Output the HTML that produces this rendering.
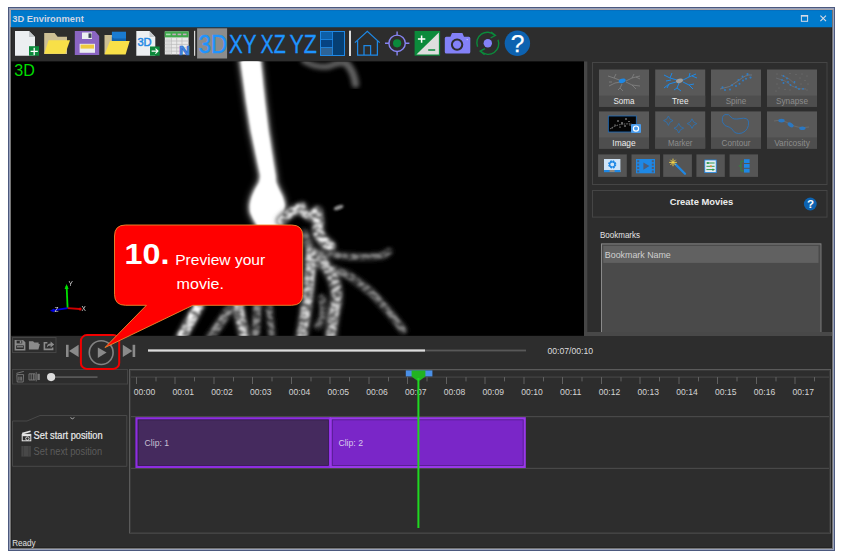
<!DOCTYPE html>
<html lang="en">
<head>
<meta charset="utf-8">
<title>3D Environment</title>
<style>
html,body{margin:0;padding:0;background:#fff;}
body{width:841px;height:558px;overflow:hidden;position:relative;font-family:"Liberation Sans",sans-serif;}
svg{position:absolute;left:0;top:0;display:block;}
text{font-family:"Liberation Sans",sans-serif;}
</style>
</head>
<body>
<svg width="841" height="558" viewBox="0 0 841 558">
<defs>
<filter id="b1" x="-20%" y="-20%" width="140%" height="140%"><feGaussianBlur stdDeviation="1.1"/></filter>
<filter id="b2" x="-20%" y="-20%" width="140%" height="140%"><feGaussianBlur stdDeviation="2.2"/></filter>
<filter id="b3" x="-50%" y="-50%" width="200%" height="200%"><feGaussianBlur stdDeviation="4"/></filter>
<filter id="b0" x="-20%" y="-20%" width="140%" height="140%"><feGaussianBlur stdDeviation="0.35"/></filter>
<filter id="b05" x="-20%" y="-20%" width="140%" height="140%"><feGaussianBlur stdDeviation="0.85"/></filter>
<filter id="b15" x="-20%" y="-20%" width="140%" height="140%"><feGaussianBlur stdDeviation="1.9"/></filter>
<filter id="tex" x="0" y="0" width="841" height="558" filterUnits="userSpaceOnUse" color-interpolation-filters="sRGB">
<feGaussianBlur in="SourceGraphic" stdDeviation="1.2" result="bl"/>
<feTurbulence type="fractalNoise" baseFrequency="0.17 0.26" numOctaves="1" seed="11" result="n"/>
<feColorMatrix in="n" type="matrix" values="0 0 0 0 0  0 0 0 0 0  0 0 0 0 0  0 3.4 0 0 -1.15" result="na"/>
<feComposite in="bl" in2="na" operator="in" result="t"/>
<feGaussianBlur in="t" stdDeviation="0.8"/>
</filter>
<clipPath id="vp"><rect x="11" y="61.4" width="573" height="274.4"/></clipPath>
</defs>

<!-- window frame -->
<g id="frame">
<rect x="8" y="7" width="827" height="544" fill="#4c597e"/>
<rect x="9" y="8" width="825" height="542" fill="#98a1ba"/>
<rect x="10" y="9" width="823" height="540" fill="#747474"/>
<rect x="10" y="9" width="823" height="1" fill="#aca4a6"/>
<rect x="10" y="9" width="1" height="18" fill="#aaa3ab"/>
<rect x="11" y="10" width="821" height="538" fill="#242424"/>
<rect x="12" y="10" width="819" height="537" fill="#2d2d2d"/>
</g>

<!-- title bar -->
<g id="titlebar">
<rect x="11" y="10" width="821" height="17.25" fill="#007acc"/><rect x="11" y="10" width="821" height="1" fill="#046fbf"/>
<text x="12.3" y="22" font-size="9.5" font-weight="bold" fill="#cfd5e3" textLength="71.5" lengthAdjust="spacingAndGlyphs">3D Environment</text>
<rect x="801.4" y="15.9" width="6.2" height="5.4" fill="none" stroke="#d6dbe6" stroke-width="1"/><rect x="800.9" y="15" width="7.2" height="1.4" fill="#d6dbe6"/>
<path d="M820.4 15.6 L826 21.2 M826 15.6 L820.4 21.2" stroke="#d6dbe6" stroke-width="1.1" fill="none"/>
</g>

<!-- TOOLBAR -->
<g id="toolbar">
<!-- new file -->
<path d="M15 31 H29 L35 37 V55.7 H15 Z" fill="#eceff1"/>
<path d="M29 31 L35 37 H29 Z" fill="#c3c7ca"/>
<rect x="29" y="46.2" width="10" height="9.5" fill="#0b8a3b"/>
<path d="M34.2 47.8 V55 M30.6 51.4 H37.8" stroke="#fff" stroke-width="1.3"/>
<!-- folder open -->
<path d="M44.2 33 H54.6 L57.6 36.7 H67 V54 H44.2 Z" fill="#cdbf94"/>
<path d="M48.6 40.3 H70 L65.3 53.8 H44.2 Z" fill="#f8e048"/>
<!-- save -->
<path d="M74.8 31 H95 L99.2 36 V55 H74.8 Z" fill="#8a65c2"/>
<rect x="82" y="32.5" width="10" height="6.5" fill="#eceff1"/>
<rect x="88.5" y="33.4" width="3" height="4.5" fill="#3b4458"/>
<rect x="79.6" y="43.8" width="15.4" height="9" fill="#eceff1"/>
<rect x="80.6" y="44.6" width="13.4" height="4" fill="#efc93e"/>
<!-- folder w/ docs -->
<path d="M104.5 35 H113 V54 H104.5 Z" fill="#cdbf94"/>
<rect x="111.9" y="31.7" width="14.1" height="9.4" fill="#1a7bd0"/>
<path d="M111.9 37 L114 38.5 H126 V41 H111.9 Z" fill="#1262ac"/>
<path d="M110 40.9 H129.7 L125.6 54.5 H104.5 Z" fill="#f8e048"/>
<!-- 3D export -->
<path d="M136.3 31 H149.5 L155.3 37 V55.7 H136.3 Z" fill="#eceff1"/>
<path d="M149.5 31 L155.3 37 H149.5 Z" fill="#c3c7ca"/>
<text x="137.4" y="45.7" font-size="10.6" fill="#1e88e5" stroke="#1e88e5" stroke-width="0.45" textLength="14.2" lengthAdjust="spacingAndGlyphs">3D</text>
<rect x="150" y="46.5" width="9.7" height="9.2" fill="#0b8a3b"/>
<path d="M151.6 51.1 H158 M155.4 48.6 L158 51.1 L155.4 53.6" stroke="#fff" stroke-width="1.1" fill="none"/>
<!-- table -->
<rect x="164.8" y="31.4" width="23.8" height="23.1" fill="#e9e9e9"/>
<rect x="164.8" y="31.4" width="23.8" height="6" fill="#3fa84c"/>
<rect x="166" y="33.6" width="4.6" height="1.6" fill="#a9dcae"/><rect x="172.3" y="33.6" width="3.6" height="1.6" fill="#c7a8c0"/><rect x="177.6" y="33.6" width="3.6" height="1.6" fill="#c7a8c0"/><rect x="182.9" y="33.6" width="3.6" height="1.6" fill="#c7a8c0"/>
<path d="M164.8 41 H188.6 M164.8 44.4 H188.6 M164.8 47.8 H188.6 M164.8 51.2 H188.6 M171.4 37.4 V54.5 M176.7 37.4 V54.5 M182 37.4 V54.5" stroke="#b9b9b9" stroke-width="0.7" fill="none"/>
<rect x="165.6" y="38.4" width="5" height="15.6" fill="#cfcfcf" opacity="0.6"/>
<text x="178.9" y="55.3" font-size="13.4" font-weight="bold" fill="#4a8ae6" stroke="#2f6fd0" stroke-width="0.7" textLength="11.2" lengthAdjust="spacingAndGlyphs">N</text>
<!-- separator -->
<rect x="194" y="30.8" width="1.2" height="25" fill="#d8d8d8"/>
<!-- 3D XY XZ YZ -->
<rect x="197.1" y="28.3" width="30" height="30.2" fill="#8c8c8c"/>
<text x="198.4" y="52.6" font-size="26" fill="#1e94ff" stroke="#1e94ff" stroke-width="0.3" textLength="28.8" lengthAdjust="spacingAndGlyphs">3D</text>
<text x="229" y="52.6" font-size="26" fill="#1e94ff" stroke="#1e94ff" stroke-width="0.3" textLength="27.6" lengthAdjust="spacingAndGlyphs">XY</text>
<text x="260.6" y="52.6" font-size="26" fill="#1e94ff" stroke="#1e94ff" stroke-width="0.3" textLength="25.2" lengthAdjust="spacingAndGlyphs">XZ</text>
<text x="289.4" y="52.6" font-size="26" fill="#1e94ff" stroke="#1e94ff" stroke-width="0.3" textLength="27.4" lengthAdjust="spacingAndGlyphs">YZ</text>
<!-- panel layout icon -->
<rect x="320" y="31" width="25" height="25" fill="#1e88e5"/>
<rect x="321" y="32" width="11.2" height="7.2" fill="#0d5fa8"/>
<rect x="321" y="40" width="11.2" height="7" fill="#064383"/>
<rect x="321" y="47.8" width="11.2" height="7.2" fill="#2d6396"/>
<rect x="333" y="32" width="11" height="23" fill="#063f73"/>
<rect x="349" y="30.7" width="2" height="25.3" fill="#dcdcdc"/>
<!-- home -->
<path d="M354.9 42.6 L367.3 31.4 L379.7 42.6 M357.6 40.4 V55 H377.4 V40.4 M364 55 V45.6 H370.6 V55" fill="none" stroke="#1e88e5" stroke-width="1.25"/>
<!-- target -->
<circle cx="397.1" cy="43.3" r="8.2" fill="none" stroke="#8784f2" stroke-width="1.4"/>
<path d="M397.1 31.4 V35.4 M397.1 51.2 V55.4 M385 43.3 H389.2 M405 43.3 H409.4" stroke="#8784f2" stroke-width="1.4"/>
<circle cx="397.1" cy="43.3" r="4.1" fill="#0b8a3b"/>
<!-- plus/minus -->
<rect x="414.6" y="31" width="25.5" height="24.7" fill="#0b8a3b"/>
<path d="M438.9 32.6 V54.4 H416.4 Z" fill="#dedede"/>
<path d="M421.6 35.4 V42.8 M417.9 39.1 H425.3" stroke="#fff" stroke-width="1.5"/>
<path d="M428.2 50 H435.2" stroke="#0b8a3b" stroke-width="1.5"/>
<!-- camera -->
<path d="M446.3 36.8 H450.4 L452 33 H462.4 L464 36.8 H468.8 Q470.3 36.8 470.3 38.3 V52 Q470.3 53.5 468.8 53.5 H446.3 Q444.8 53.5 444.8 52 V38.3 Q444.8 36.8 446.3 36.8 Z" fill="#8381f7"/>
<circle cx="457.1" cy="44.6" r="5.2" fill="#8381f7" stroke="#2d2d2d" stroke-width="2"/>
<circle cx="467.2" cy="39.6" r="0.7" fill="#d0d0ff"/>
<!-- refresh -->
<path d="M477.6 46.8 A10.6 10.6 0 0 1 494.6 35" fill="none" stroke="#0b8a3b" stroke-width="1.4"/>
<path d="M491 32 L495.4 35.4 L490.6 38" fill="none" stroke="#0b8a3b" stroke-width="1.4"/>
<path d="M498 39.8 A10.6 10.6 0 0 1 481 51.6" fill="none" stroke="#0b8a3b" stroke-width="1.4"/>
<path d="M484.6 54.6 L480.2 51.2 L485 48.6" fill="none" stroke="#0b8a3b" stroke-width="1.4"/>
<circle cx="487.8" cy="43.3" r="4.2" fill="#8381f7"/>
<!-- help -->
<circle cx="517.4" cy="43.3" r="12.7" fill="#0d62b0"/>
<text x="517.6" y="52.4" font-size="24.5" fill="#fff" text-anchor="middle" stroke="#fff" stroke-width="0.25">?</text>
</g>



<!-- VIEWPORT -->
<g id="viewport">
<rect x="11" y="61.4" width="573" height="274.4" fill="#000"/>
<g clip-path="url(#vp)">
<!-- glow of main trunk + soma -->
<path d="M239.7 48.0 L239.9 50.0 L240.1 52.0 L240.3 54.0 L240.5 56.0 L240.7 58.0 L240.9 60.0 L241.1 62.0 L241.4 64.0 L241.6 66.0 L241.9 68.0 L242.2 70.0 L242.5 72.0 L242.7 74.0 L243.0 76.0 L243.3 78.0 L243.6 80.0 L243.8 82.0 L244.1 84.0 L244.4 86.0 L244.7 88.0 L244.9 90.0 L245.2 92.0 L245.5 94.0 L245.8 96.0 L246.0 98.0 L246.3 100.0 L246.6 102.0 L246.9 104.0 L247.3 106.0 L247.6 108.0 L247.9 110.0 L248.2 112.0 L248.5 114.0 L248.9 116.0 L249.2 118.0 L249.5 120.0 L249.8 122.0 L250.1 124.0 L250.5 126.0 L250.8 128.0 L251.1 130.0 L251.5 132.0 L251.9 134.0 L252.4 136.0 L252.8 138.0 L253.2 140.0 L253.6 142.0 L254.0 144.0 L254.5 146.0 L254.9 148.0 L255.3 150.0 L255.7 152.0 L256.1 154.0 L256.6 156.0 L257.0 158.0 L257.4 160.0 L257.8 162.0 L258.2 164.0 L258.7 166.0 L259.1 168.0 L259.5 170.0 L259.9 172.0 L260.4 174.0 L260.8 176.0 L260.5 178.0 L260.1 180.0 L259.8 182.0 L258.6 184.0 L257.4 186.0 L256.2 188.0 L255.1 190.0 L254.2 192.0 L253.3 194.0 L252.5 196.0 L251.7 198.0 L251.2 200.0 L250.8 202.0 L250.3 204.0 L250.1 206.0 L250.2 208.0 L250.3 210.0 L250.4 212.0 L251.3 214.0 L252.2 216.0 L253.1 218.0 L254.2 220.0 L255.4 222.0 L256.5 224.0 L257.8 226.0 L259.0 228.0 L260.2 230.0 L261.5 232.0 L275.5 232.0 L276.6 230.0 L277.7 228.0 L278.8 226.0 L279.9 224.0 L280.6 222.0 L281.4 220.0 L282.1 218.0 L282.6 216.0 L283.1 214.0 L283.6 212.0 L283.9 210.0 L284.2 208.0 L284.5 206.0 L284.3 204.0 L283.8 202.0 L283.2 200.0 L282.7 198.0 L281.9 196.0 L280.9 194.0 L279.9 192.0 L278.9 190.0 L278.0 188.0 L277.1 186.0 L276.3 184.0 L275.4 182.0 L275.3 180.0 L275.3 178.0 L275.2 176.0 L274.9 174.0 L274.6 172.0 L274.2 170.0 L273.9 168.0 L273.6 166.0 L273.2 164.0 L272.9 162.0 L272.6 160.0 L272.3 158.0 L272.0 156.0 L271.7 154.0 L271.3 152.0 L271.0 150.0 L270.7 148.0 L270.4 146.0 L270.1 144.0 L269.8 142.0 L269.5 140.0 L269.2 138.0 L268.8 136.0 L268.5 134.0 L268.2 132.0 L267.9 130.0 L267.7 128.0 L267.4 126.0 L267.2 124.0 L266.9 122.0 L266.7 120.0 L266.5 118.0 L266.2 116.0 L266.0 114.0 L265.7 112.0 L265.5 110.0 L265.3 108.0 L265.0 106.0 L264.8 104.0 L264.5 102.0 L264.3 100.0 L264.1 98.0 L263.9 96.0 L263.7 94.0 L263.5 92.0 L263.2 90.0 L263.0 88.0 L262.8 86.0 L262.6 84.0 L262.4 82.0 L262.2 80.0 L262.0 78.0 L261.8 76.0 L261.6 74.0 L261.4 72.0 L261.1 70.0 L260.9 68.0 L260.7 66.0 L260.5 64.0 L260.3 62.0 L260.1 60.0 L259.9 58.0 L259.7 56.0 L259.5 54.0 L259.3 52.0 L259.1 50.0 L258.9 48.0 Z" fill="#fff" filter="url(#b3)" opacity="0.75"/>
<path d="M239.1 48.0 L239.3 50.0 L239.5 52.0 L239.7 54.0 L239.9 56.0 L240.1 58.0 L240.3 60.0 L240.5 62.0 L240.8 64.0 L241.0 66.0 L241.3 68.0 L241.6 70.0 L241.9 72.0 L242.1 74.0 L242.4 76.0 L242.7 78.0 L243.0 80.0 L243.2 82.0 L243.5 84.0 L243.8 86.0 L244.1 88.0 L244.3 90.0 L244.6 92.0 L244.9 94.0 L245.2 96.0 L245.4 98.0 L245.7 100.0 L246.0 102.0 L246.3 104.0 L246.7 106.0 L247.0 108.0 L247.3 110.0 L247.6 112.0 L247.9 114.0 L248.3 116.0 L248.6 118.0 L248.9 120.0 L249.2 122.0 L249.5 124.0 L249.9 126.0 L250.2 128.0 L250.5 130.0 L250.9 132.0 L251.3 134.0 L251.8 136.0 L252.2 138.0 L252.6 140.0 L253.0 142.0 L253.4 144.0 L253.9 146.0 L254.3 148.0 L254.7 150.0 L255.1 152.0 L255.5 154.0 L256.0 156.0 L256.4 158.0 L256.8 160.0 L257.2 162.0 L257.6 164.0 L258.1 166.0 L258.5 168.0 L258.9 170.0 L259.4 172.0 L259.8 174.0 L260.2 176.0 L259.9 178.0 L259.5 180.0 L259.2 182.0 L258.0 184.0 L256.8 186.0 L255.6 188.0 L254.5 190.0 L253.6 192.0 L252.8 194.0 L251.9 196.0 L251.1 198.0 L250.7 200.0 L250.1 202.0 L249.7 204.0 L249.5 206.0 L249.6 208.0 L249.7 210.0 L249.8 212.0 L250.7 214.0 L251.6 216.0 L252.5 218.0 L253.6 220.0 L254.8 222.0 L255.9 224.0 L257.1 226.0 L258.4 228.0 L259.7 230.0 L260.9 232.0 L276.1 232.0 L277.2 230.0 L278.3 228.0 L279.4 226.0 L280.5 224.0 L281.2 222.0 L282.0 220.0 L282.7 218.0 L283.2 216.0 L283.7 214.0 L284.2 212.0 L284.5 210.0 L284.8 208.0 L285.1 206.0 L284.9 204.0 L284.4 202.0 L283.8 200.0 L283.3 198.0 L282.5 196.0 L281.5 194.0 L280.5 192.0 L279.5 190.0 L278.6 188.0 L277.7 186.0 L276.9 184.0 L276.0 182.0 L275.9 180.0 L275.9 178.0 L275.8 176.0 L275.5 174.0 L275.1 172.0 L274.8 170.0 L274.5 168.0 L274.2 166.0 L273.9 164.0 L273.5 162.0 L273.2 160.0 L272.9 158.0 L272.6 156.0 L272.3 154.0 L271.9 152.0 L271.6 150.0 L271.3 148.0 L271.0 146.0 L270.7 144.0 L270.4 142.0 L270.1 140.0 L269.8 138.0 L269.4 136.0 L269.1 134.0 L268.8 132.0 L268.5 130.0 L268.3 128.0 L268.0 126.0 L267.8 124.0 L267.5 122.0 L267.3 120.0 L267.1 118.0 L266.8 116.0 L266.6 114.0 L266.3 112.0 L266.1 110.0 L265.9 108.0 L265.6 106.0 L265.4 104.0 L265.1 102.0 L264.9 100.0 L264.7 98.0 L264.5 96.0 L264.3 94.0 L264.1 92.0 L263.8 90.0 L263.6 88.0 L263.4 86.0 L263.2 84.0 L263.0 82.0 L262.8 80.0 L262.6 78.0 L262.4 76.0 L262.2 74.0 L262.0 72.0 L261.7 70.0 L261.5 68.0 L261.3 66.0 L261.1 64.0 L260.9 62.0 L260.7 60.0 L260.5 58.0 L260.3 56.0 L260.1 54.0 L259.9 52.0 L259.7 50.0 L259.5 48.0 Z" fill="#fff" filter="url(#b15)"/>
<path d="M240.3 48.0 L240.5 50.0 L240.7 52.0 L240.9 54.0 L241.1 56.0 L241.3 58.0 L241.5 60.0 L241.7 62.0 L242.0 64.0 L242.2 66.0 L242.5 68.0 L242.8 70.0 L243.1 72.0 L243.3 74.0 L243.6 76.0 L243.9 78.0 L244.2 80.0 L244.4 82.0 L244.7 84.0 L245.0 86.0 L245.3 88.0 L245.5 90.0 L245.8 92.0 L246.1 94.0 L246.4 96.0 L246.6 98.0 L246.9 100.0 L247.2 102.0 L247.5 104.0 L247.9 106.0 L248.2 108.0 L248.5 110.0 L248.8 112.0 L249.1 114.0 L249.5 116.0 L249.8 118.0 L250.1 120.0 L250.4 122.0 L250.7 124.0 L251.1 126.0 L251.4 128.0 L251.7 130.0 L252.1 132.0 L252.5 134.0 L253.0 136.0 L253.4 138.0 L253.8 140.0 L254.2 142.0 L254.6 144.0 L255.1 146.0 L255.5 148.0 L255.9 150.0 L256.3 152.0 L256.7 154.0 L257.2 156.0 L257.6 158.0 L258.0 160.0 L258.4 162.0 L258.9 164.0 L259.3 166.0 L259.7 168.0 L260.1 170.0 L260.6 172.0 L261.0 174.0 L261.4 176.0 L261.1 178.0 L260.7 180.0 L260.4 182.0 L259.2 184.0 L258.0 186.0 L256.8 188.0 L255.7 190.0 L254.8 192.0 L253.9 194.0 L253.1 196.0 L252.3 198.0 L251.9 200.0 L251.3 202.0 L250.9 204.0 L250.7 206.0 L250.8 208.0 L250.9 210.0 L251.0 212.0 L251.9 214.0 L252.8 216.0 L253.7 218.0 L254.8 220.0 L256.0 222.0 L257.1 224.0 L258.3 226.0 L259.6 228.0 L260.9 230.0 L262.1 232.0 L274.9 232.0 L276.0 230.0 L277.1 228.0 L278.2 226.0 L279.3 224.0 L280.0 222.0 L280.8 220.0 L281.5 218.0 L282.0 216.0 L282.5 214.0 L283.0 212.0 L283.3 210.0 L283.6 208.0 L283.9 206.0 L283.7 204.0 L283.2 202.0 L282.6 200.0 L282.1 198.0 L281.3 196.0 L280.3 194.0 L279.3 192.0 L278.3 190.0 L277.4 188.0 L276.5 186.0 L275.7 184.0 L274.8 182.0 L274.7 180.0 L274.7 178.0 L274.6 176.0 L274.3 174.0 L273.9 172.0 L273.6 170.0 L273.3 168.0 L273.0 166.0 L272.6 164.0 L272.3 162.0 L272.0 160.0 L271.7 158.0 L271.4 156.0 L271.1 154.0 L270.7 152.0 L270.4 150.0 L270.1 148.0 L269.8 146.0 L269.5 144.0 L269.2 142.0 L268.9 140.0 L268.6 138.0 L268.2 136.0 L267.9 134.0 L267.6 132.0 L267.3 130.0 L267.1 128.0 L266.8 126.0 L266.6 124.0 L266.3 122.0 L266.1 120.0 L265.9 118.0 L265.6 116.0 L265.4 114.0 L265.1 112.0 L264.9 110.0 L264.7 108.0 L264.4 106.0 L264.2 104.0 L263.9 102.0 L263.7 100.0 L263.5 98.0 L263.3 96.0 L263.1 94.0 L262.9 92.0 L262.6 90.0 L262.4 88.0 L262.2 86.0 L262.0 84.0 L261.8 82.0 L261.6 80.0 L261.4 78.0 L261.2 76.0 L261.0 74.0 L260.8 72.0 L260.5 70.0 L260.3 68.0 L260.1 66.0 L259.9 64.0 L259.7 62.0 L259.5 60.0 L259.3 58.0 L259.1 56.0 L258.9 54.0 L258.7 52.0 L258.5 50.0 L258.3 48.0 Z" fill="#fff" filter="url(#b1)"/>
<!-- faint top dendrite -->
<g filter="url(#b2)" fill="none" stroke="#626262" stroke-linecap="round">
<path d="M304 61 Q318 69 330 66 Q340 61 347 64" stroke-width="6"/><path d="M347 64 Q354 72 355.5 84" stroke-width="7.5"/>
</g>
<!-- lower dendrites -->
<g fill="none" stroke-linecap="round" stroke-linejoin="round">
<g filter="url(#b2)">
<path d="M281.5 220.6 Q290 211 302 207" stroke-width="11.0" stroke="#616161"/>
<path d="M299 209 Q304 213 309 216.4 Q313 213 317 212" stroke-width="9.5" stroke="#616161"/>
<path d="M317 212 Q319 222 318 232 Q322 241 330 246" stroke-width="12.5" stroke="#646464"/>
<path d="M304 234 Q308 244 312 254" stroke-width="10.5" stroke="#353535"/>
<path d="M316 252 Q350 259 380 256 Q386 255 389 251.5" stroke-width="7.5" stroke="#373737"/>
<path d="M318 264 Q335 270 348 275 Q364 286 373 294 Q390 312 403 330" stroke-width="9.0" stroke="#383838"/>
<path d="M311 252 Q310 290 301.5 338" stroke-width="12.5" stroke="#5a5a5a"/>
<path d="M320 259 Q340 280 336 304 Q332 320 331 338" stroke-width="12.5" stroke="#545454"/>
<path d="M322 298 Q326 315 318 326" stroke-width="8.5" stroke="#2f2f2f"/>
<path d="M199 305 L181 338" stroke-width="12.0" stroke="#6b6b6b"/>
<path d="M229 310 L210 338" stroke-width="10.0" stroke="#3f3f3f"/>
<path d="M238 303 Q240 320 245 338" stroke-width="12.0" stroke="#5a5a5a"/>
<path d="M257.5 303 L255.5 338" stroke-width="9.0" stroke="#3c3c3c"/>
<path d="M269 307 L272 338" stroke-width="8.0" stroke="#393939"/>
</g>
<g filter="url(#tex)">
<path d="M281.5 220.6 Q290 211 302 207" stroke-width="8.1" stroke="#e8e8e8"/>
<path d="M299 209 Q304 213 309 216.4 Q313 213 317 212" stroke-width="6.8" stroke="#e8e8e8"/>
<path d="M317 212 Q319 222 318 232 Q322 241 330 246" stroke-width="9.3" stroke="#f0f0f0"/>
<path d="M304 234 Q308 244 312 254" stroke-width="7.6" stroke="#808080"/>
<path d="M316 252 Q350 259 380 256 Q386 255 389 251.5" stroke-width="5.1" stroke="#848484"/>
<path d="M318 264 Q335 270 348 275 Q364 286 373 294 Q390 312 403 330" stroke-width="6.4" stroke="#868686"/>
<path d="M311 252 Q310 290 301.5 338" stroke-width="9.3" stroke="#d8d8d8"/>
<path d="M320 259 Q340 280 336 304 Q332 320 331 338" stroke-width="9.3" stroke="#c8c8c8"/>
<path d="M322 298 Q326 315 318 326" stroke-width="6.0" stroke="#707070"/>
<path d="M199 305 L181 338" stroke-width="8.9" stroke="#ffffff"/>
<path d="M229 310 L210 338" stroke-width="7.2" stroke="#989898"/>
<path d="M238 303 Q240 320 245 338" stroke-width="8.9" stroke="#d8d8d8"/>
<path d="M257.5 303 L255.5 338" stroke-width="6.4" stroke="#909090"/>
<path d="M269 307 L272 338" stroke-width="5.5" stroke="#888888"/>
</g>
<g stroke-dasharray="1.5 1.9" stroke-linecap="butt" filter="url(#b05)" opacity="0.25">
<path d="M281.5 220.6 Q290 211 302 207" stroke-width="5.7" stroke="#e8e8e8"/>
<path d="M299 209 Q304 213 309 216.4 Q313 213 317 212" stroke-width="4.8" stroke="#e8e8e8"/>
<path d="M317 212 Q319 222 318 232 Q322 241 330 246" stroke-width="6.6" stroke="#f0f0f0"/>
<path d="M304 234 Q308 244 312 254" stroke-width="5.4" stroke="#808080"/>
<path d="M316 252 Q350 259 380 256 Q386 255 389 251.5" stroke-width="3.6" stroke="#848484"/>
<path d="M318 264 Q335 270 348 275 Q364 286 373 294 Q390 312 403 330" stroke-width="4.5" stroke="#868686"/>
<path d="M311 252 Q310 290 301.5 338" stroke-width="6.6" stroke="#d8d8d8"/>
<path d="M320 259 Q340 280 336 304 Q332 320 331 338" stroke-width="6.6" stroke="#c8c8c8"/>
<path d="M322 298 Q326 315 318 326" stroke-width="4.2" stroke="#707070"/>
<path d="M199 305 L181 338" stroke-width="6.3" stroke="#ffffff"/>
<path d="M229 310 L210 338" stroke-width="5.1" stroke="#989898"/>
<path d="M238 303 Q240 320 245 338" stroke-width="6.3" stroke="#d8d8d8"/>
<path d="M257.5 303 L255.5 338" stroke-width="4.5" stroke="#909090"/>
<path d="M269 307 L272 338" stroke-width="3.9" stroke="#888888"/>
</g>
<ellipse cx="338.6" cy="207.6" rx="5" ry="2" transform="rotate(-20 338.6 207.6)" fill="#9a9a9a" filter="url(#b1)"/>
</g>
</g>
<!-- 3D label -->
<text x="14.3" y="76.1" font-size="17.1" fill="#00dc00" textLength="20.6" lengthAdjust="spacingAndGlyphs">3D</text>
<!-- axes -->
<g filter="url(#b0)">
<path d="M67.6 308.2 L66.6 286" stroke="#00e000" stroke-width="1.8"/>
<path d="M64.6 289 L66.6 284 L68.6 289 Z" fill="#00e000"/>
<path d="M67.6 308.2 L80 309" stroke="#d00000" stroke-width="1.8"/>
<circle cx="80.2" cy="309" r="1.5" fill="#e00000"/>
<path d="M67.6 308.2 L53 310.4" stroke="#0000e0" stroke-width="1.8"/>
<path d="M54 308.6 L50 310.8 L54.4 312.4 Z" fill="#0000e0"/>
<text x="68.4" y="286.4" font-size="6.5" fill="#ddd">Y</text>
<text x="81.4" y="310.6" font-size="6.5" fill="#ddd">X</text>
<text x="54.6" y="312" font-size="6.5" fill="#ddd">Z</text>
</g>
</g>

<!-- RIGHTPANEL -->
<g id="rightpanel">
<rect x="584" y="61.5" width="3.3" height="274.5" fill="#464646"/>
<rect x="584" y="332" width="248" height="4" fill="#484848"/>
<!-- group box 1 -->
<rect x="592.5" y="62.5" width="234.5" height="122" fill="none" stroke="#454545" stroke-width="1"/>
<!-- row 1 buttons -->
<g>
<rect x="599" y="69.5" width="50" height="37.2" fill="#595959"/><rect x="599" y="95.6" width="50" height="11.1" fill="#4e4e4e"/>
<rect x="655.2" y="69.5" width="50" height="37.2" fill="#595959"/><rect x="655.2" y="95.6" width="50" height="11.1" fill="#4e4e4e"/>
<rect x="711" y="69.5" width="50" height="37.2" fill="#595959"/><rect x="711" y="95.6" width="50" height="11.1" fill="#4e4e4e"/>
<rect x="767" y="69.5" width="50" height="37.2" fill="#595959"/><rect x="767" y="95.6" width="50" height="11.1" fill="#4e4e4e"/>
<rect x="599" y="111.4" width="50" height="37.2" fill="#595959"/><rect x="599" y="137.4" width="50" height="11.2" fill="#4e4e4e"/>
<rect x="655.2" y="111.4" width="50" height="37.2" fill="#595959"/><rect x="655.2" y="137.4" width="50" height="11.2" fill="#4e4e4e"/>
<rect x="711" y="111.4" width="50" height="37.2" fill="#595959"/><rect x="711" y="137.4" width="50" height="11.2" fill="#4e4e4e"/>
<rect x="767" y="111.4" width="50" height="37.2" fill="#595959"/><rect x="767" y="137.4" width="50" height="11.2" fill="#4e4e4e"/>
</g>
<g font-size="9.4" text-anchor="middle">
<text x="624" y="104.3" fill="#ececec" textLength="21" lengthAdjust="spacingAndGlyphs">Soma</text>
<text x="680.2" y="104.3" fill="#ececec" textLength="16.5" lengthAdjust="spacingAndGlyphs">Tree</text>
<text x="736" y="104.3" fill="#8c8c8c" textLength="20.7" lengthAdjust="spacingAndGlyphs">Spine</text>
<text x="792" y="104.3" fill="#8c8c8c" textLength="32" lengthAdjust="spacingAndGlyphs">Synapse</text>
<text x="624" y="146.2" fill="#ececec" textLength="23.3" lengthAdjust="spacingAndGlyphs">Image</text>
<text x="680.2" y="146.2" fill="#8c8c8c" textLength="24.5" lengthAdjust="spacingAndGlyphs">Marker</text>
<text x="736" y="146.2" fill="#8c8c8c" textLength="28.9" lengthAdjust="spacingAndGlyphs">Contour</text>
<text x="792" y="146.2" fill="#8c8c8c" textLength="35.7" lengthAdjust="spacingAndGlyphs">Varicosity</text>
</g>
<!-- Soma icon -->
<g fill="none" stroke="#8a8a8a" stroke-width="0.7">
<path d="M608 76 L614 78 L622 81 M614 78 L616 74 M609 86 L615 83 L621 82 M612 82 L609 82 M626 81 L632 78 L640 76 M632 78 L634 74 M636 77 L640 79 M626 82 L632 85 L640 86 M632 85 L636 89 M622 84 L620 88 L618 90 M620 88 L623 91"/>
</g>
<ellipse cx="622.2" cy="80.8" rx="3.6" ry="2.2" fill="#1e88e5" transform="rotate(-15 622.2 80.8)"/>
<!-- Tree icon -->
<g fill="none" stroke="#1e88e5" stroke-width="1">
<path d="M664 75 L670 78 L677 80 M670 78 L672 73 M666 81 L671 80 M664 88 L669 84 L676 82 M669 84 L667 88 M683 80 L689 77 L696 74 M689 77 L690 73 M692 76 L697 78 M683 82 L689 85 L694 84 M689 85 L693 89 M679 83 L677 88 L674 90 M677 88 L681 91"/>
</g>
<ellipse cx="679.5" cy="80.8" rx="3.6" ry="2.2" fill="#9e9e9e" transform="rotate(-15 679.5 80.8)"/>
<!-- Spine icon -->
<path d="M720 89 Q730 88 738 81 Q746 74 752 75" fill="none" stroke="#6f7c8c" stroke-width="0.8"/>
<g fill="#2f7cc4"><circle cx="722.5" cy="87.3" r="1.1"/><circle cx="725" cy="90" r="1"/><circle cx="730" cy="89.5" r="1"/><circle cx="732" cy="85.2" r="1"/><circle cx="736" cy="86" r="1"/><circle cx="738.5" cy="80" r="1.1"/><circle cx="739.5" cy="83.8" r="1"/><circle cx="742.5" cy="76.6" r="1"/><circle cx="743" cy="80.4" r="1"/><circle cx="746" cy="78.8" r="1"/><circle cx="747.5" cy="74.2" r="1.1"/><circle cx="750.5" cy="77.6" r="1.1"/></g>
<!-- Synapse icon -->
<path d="M776 78 Q786 80 792 86 Q798 90 806 89 M781 75 Q790 78 795 84" fill="none" stroke="#70757c" stroke-width="0.6"/>
<g fill="#2f7cc4"><circle cx="783.5" cy="76" r="0.9"/><circle cx="787" cy="78.4" r="0.9"/><circle cx="782" cy="80" r="0.9"/><circle cx="783.5" cy="83" r="0.9"/><circle cx="788" cy="82" r="0.9"/><circle cx="790.5" cy="85" r="0.9"/><circle cx="794.5" cy="82" r="0.9"/><circle cx="796" cy="87" r="0.9"/><circle cx="799" cy="89" r="0.9"/><circle cx="803" cy="88.8" r="0.9"/></g>
<g fill="#777"><circle cx="777" cy="74" r="0.5"/><circle cx="790" cy="73.6" r="0.5"/><circle cx="796" cy="74.6" r="0.5"/><circle cx="802" cy="74" r="0.5"/><circle cx="807" cy="76" r="0.5"/><circle cx="800" cy="78" r="0.5"/><circle cx="805" cy="80.5" r="0.5"/><circle cx="808" cy="84" r="0.5"/><circle cx="801" cy="84" r="0.5"/><circle cx="777" cy="84" r="0.5"/><circle cx="779" cy="88" r="0.5"/><circle cx="785" cy="89.6" r="0.5"/><circle cx="790" cy="90" r="0.5"/><circle cx="776" cy="91" r="0.5"/><circle cx="807" cy="90" r="0.5"/></g>
<!-- Image icon -->
<rect x="608.3" y="116" width="28" height="16" fill="#050505" stroke="#1e6fc0" stroke-width="0.8"/>
<g fill="#ddd"><circle cx="618" cy="121" r="0.7"/><circle cx="622" cy="123" r="0.8"/><circle cx="626" cy="119" r="0.7"/><circle cx="629" cy="121.5" r="0.6"/><circle cx="615" cy="125" r="0.6"/><circle cx="620" cy="127" r="0.6"/><circle cx="625" cy="126" r="0.7"/><circle cx="612" cy="128" r="0.5"/><circle cx="630" cy="125" r="0.5"/></g>
<path d="M610 129 Q618 123 632 124" fill="none" stroke="#999" stroke-width="0.8" stroke-dasharray="1.5 1"/>
<rect x="631" y="124" width="10" height="9" rx="1" fill="#4a9bea"/>
<circle cx="636" cy="128.6" r="2.6" fill="none" stroke="#fff" stroke-width="1.2"/>
<!-- Marker icon -->
<g fill="none" stroke="#2b73b8" stroke-width="0.8">
<path d="M668.4 116 Q669.4 120 673 120.6 Q669.4 121.4 668.4 125.4 Q667.4 121.4 663.6 120.6 Q667.4 120 668.4 116 Z"/>
<path d="M678.8 123.4 Q679.8 127.4 683.6 128.2 Q679.8 129 678.8 133 Q677.8 129 674 128.2 Q677.8 127.4 678.8 123.4 Z"/>
<path d="M692 118.8 Q693 122.8 696.8 123.6 Q693 124.4 692 128.4 Q691 124.4 687.2 123.6 Q691 122.8 692 118.8 Z"/>
</g>
<!-- Contour icon -->
<path d="M725 114.6 Q729 113.6 731 117 Q733 120 740 118.6 Q748 117 748.6 122 Q749 130 742 133 Q735 135 732 129 Q730 127 725 125.6 Q721 122 722.4 117.6 Q723 115.2 725 114.6 Z" fill="none" stroke="#2b73b8" stroke-width="0.9"/>
<!-- Varicosity icon -->
<path d="M774 121 Q782 119 790 124 Q798 129 809 127" fill="none" stroke="#777" stroke-width="0.6"/>
<g fill="#2b78c2"><ellipse cx="781.5" cy="120.6" rx="3.2" ry="1.9"/><ellipse cx="790.6" cy="124.8" rx="3.3" ry="2" transform="rotate(35 790.6 124.8)"/><ellipse cx="802.4" cy="128.2" rx="3.2" ry="1.8"/></g>
<!-- small buttons -->
<g fill="#555">
<rect x="598.1" y="154.4" width="28.7" height="22.5"/><rect x="631.5" y="154.4" width="28.5" height="22.5"/><rect x="663.2" y="154.4" width="28.7" height="22.5"/><rect x="696.4" y="154.4" width="28.4" height="22.5"/><rect x="729.6" y="154.4" width="28.4" height="22.5"/>
</g>
<!-- settings -->
<rect x="604" y="159" width="16.4" height="13" fill="#cfe4f8"/>
<rect x="604" y="170" width="16.4" height="2.2" fill="#1e88e5"/><rect x="609.6" y="170.4" width="5" height="1.2" fill="#e08a3c"/>
<circle cx="612.2" cy="164.4" r="3.1" fill="none" stroke="#1e88e5" stroke-width="2" stroke-dasharray="1.6 0.85"/>
<circle cx="612.2" cy="164.4" r="2.6" fill="none" stroke="#1e88e5" stroke-width="1.2"/>
<!-- film -->
<rect x="636" y="159" width="19" height="14.3" fill="#1e88e5"/>
<path d="M643.4 162.4 L649.4 166.1 L643.4 169.8 Z" fill="#4e5d78"/>
<g fill="#4e5d78"><rect x="637.2" y="160.2" width="2" height="2"/><rect x="637.2" y="163.6" width="2" height="2"/><rect x="637.2" y="167" width="2" height="2"/><rect x="637.2" y="170.4" width="2" height="2"/><rect x="651.8" y="160.2" width="2" height="2"/><rect x="651.8" y="163.6" width="2" height="2"/><rect x="651.8" y="167" width="2" height="2"/><rect x="651.8" y="170.4" width="2" height="2"/></g>
<!-- wand -->
<path d="M675.6 164.4 L685 173.8" stroke="#1e88e5" stroke-width="2.2" stroke-linecap="round"/>
<path d="M673 158.6 V166.2 M669.2 162.4 H676.8 M670.4 159.8 L675.6 165 M675.6 159.8 L670.4 165" stroke="#f5d64a" stroke-width="0.9"/>
<!-- sliders -->
<rect x="704.8" y="160" width="11.4" height="12.6" fill="#e6edf4" stroke="#1e88e5" stroke-width="0.8"/>
<path d="M706.4 163 H714.6 M706.4 166.3 H714.6 M706.4 169.6 H714.6" stroke="#2f9a4c" stroke-width="1"/>
<rect x="707" y="162.2" width="1.8" height="1.7" fill="#2f9a4c"/><rect x="710" y="165.4" width="1.8" height="1.7" fill="#e08a3c"/><rect x="712" y="168.8" width="1.8" height="1.7" fill="#2f9a4c"/>
<!-- tree list -->
<path d="M744 161.2 H741 V171 H744 M741 166 H738.6" fill="none" stroke="#2f8a3c" stroke-width="0.9"/>
<g fill="#1e88e5"><rect x="744" y="159.2" width="5.6" height="3.8"/><rect x="744" y="164" width="5.6" height="3.8"/><rect x="744" y="168.8" width="5.6" height="3.8"/></g>
<!-- group box 2 -->
<rect x="592.5" y="190.5" width="234.5" height="26.6" fill="none" stroke="#454545" stroke-width="1"/>
<text x="701.5" y="205.2" font-size="9.9" font-weight="bold" fill="#ececec" text-anchor="middle" textLength="63.6" lengthAdjust="spacingAndGlyphs">Create Movies</text>
<circle cx="810.3" cy="204" r="6.4" fill="#0d62b0"/>
<text x="810.4" y="208.2" font-size="11.5" font-weight="bold" fill="#fff" text-anchor="middle">?</text>
<!-- bookmarks -->
<text x="600" y="237.6" font-size="9.2" fill="#e4e4e4" textLength="40" lengthAdjust="spacingAndGlyphs">Bookmarks</text>
<rect x="601" y="243.4" width="220.4" height="90" fill="#8a8a8a"/>
<rect x="602" y="244.4" width="218.6" height="89" fill="#4a4a4a"/>
<rect x="603.3" y="245.9" width="215.2" height="17" fill="#616161"/>
<text x="604.8" y="258" font-size="9.6" fill="#cfcfcf" textLength="66" lengthAdjust="spacingAndGlyphs">Bookmark Name</text>
<rect x="587.3" y="332" width="244.7" height="4" fill="#484848"/>
</g>


<!-- TIMELINE -->
<g id="timeline">
<!-- small toolbar 1 -->
<rect x="12.5" y="337.5" width="43.5" height="15" fill="none" stroke="#454545" stroke-width="1"/>
<g fill="#8a8a8a">
<path d="M14.6 340 H23 L25.4 342.2 V350.4 H14.6 Z"/>
<path d="M28.9 341.2 H33 L34.4 342.6 H38.6 V344 H39.9 L38.4 349.6 H28.9 Z"/>
</g>
<rect x="16.6" y="340.6" width="5.6" height="2.8" fill="#2d2d2d"/><rect x="19.8" y="340.9" width="1.6" height="2.2" fill="#8a8a8a"/>
<rect x="16.2" y="345.4" width="7.6" height="3.6" fill="#2d2d2d"/><rect x="17" y="346.2" width="6" height="1.2" fill="#8a8a8a"/>
<path d="M47.4 342.8 H44.4 V349.4 H52.6 V347.4" fill="none" stroke="#8a8a8a" stroke-width="1.6"/>
<path d="M46.8 347.4 Q47 343.6 50.6 343.6 V341.4 L54.2 344.6 L50.6 347.6 V345.6 Q48.2 345.4 46.8 347.4 Z" fill="#8a8a8a"/>
<!-- transport -->
<rect x="66" y="344.8" width="2.6" height="12.2" fill="#8a8a8a"/>
<path d="M78.6 344.8 V357 L69 350.9 Z" fill="#8a8a8a"/>
<circle cx="101.2" cy="352.6" r="11.9" fill="none" stroke="#828282" stroke-width="1.6"/>
<path d="M97.8 347.4 L106.6 352.6 L97.8 357.9 Z" fill="#8a8a8a"/>
<path d="M122.8 344.8 V357 L132.4 350.9 Z" fill="#8a8a8a"/>
<rect x="132.6" y="344.8" width="2.6" height="12.2" fill="#8a8a8a"/>
<!-- progress -->
<rect x="148" y="349.6" width="378" height="1.8" fill="#585858"/>
<rect x="148" y="349.4" width="277" height="2.2" fill="#dcdcdc"/>
<text x="547.4" y="354" font-size="9.3" fill="#dcdcdc" textLength="45.6" lengthAdjust="spacingAndGlyphs">00:07/00:10</text>
<!-- small toolbar 2 -->
<rect x="12.5" y="369.5" width="115" height="14.5" fill="none" stroke="#454545" stroke-width="1"/>
<g fill="none" stroke="#7a7a7a" stroke-width="0.9">
<path d="M16.8 374.6 H23.6 L23.2 382 H17.2 Z M16.4 373.4 L23.8 371.4 M18.8 376.6 V380.6 M20.2 376.6 V380.6 M21.6 376.6 V380.6"/>
<path d="M29 373.8 H35 V380 H29 Z M31.2 373.8 V380 M33.4 373.8 V380 M36.2 372.2 V381.4"/>
</g>
<rect x="37.4" y="373.8" width="2.4" height="6.2" fill="#7a7a7a"/>
<rect x="51" y="376.2" width="46.5" height="1.8" fill="#585858"/>
<circle cx="51.1" cy="377.1" r="4.1" fill="#dcdcdc"/>
<!-- left settings panel -->
<path d="M12.5 466.3 V421 H27 L40 415.5 H126.8 V466.3 Z" fill="none" stroke="#484848" stroke-width="1"/>
<path d="M70.4 417.6 L72.4 418.8 L74.4 417.6" fill="none" stroke="#ddd" stroke-width="0.7"/>
<!-- set start icon -->
<g>
<path d="M22 432.8 L30.4 430.4 L30.8 432 L22.4 434.4 Z" fill="#e6e6e6"/>
<rect x="22.2" y="434.4" width="8.6" height="6.4" fill="none" stroke="#e6e6e6" stroke-width="1"/>
<rect x="22.2" y="434.4" width="8.6" height="1.8" fill="#e6e6e6"/>
<circle cx="27.4" cy="438.6" r="1.7" fill="none" stroke="#e6e6e6" stroke-width="0.9"/>
</g>
<text x="33.6" y="439.3" font-size="10" fill="#ececec" stroke="#ececec" stroke-width="0.18" textLength="69" lengthAdjust="spacingAndGlyphs">Set start position</text>
<g fill="#484848"><rect x="21.4" y="446" width="9.4" height="10.6"/></g>
<path d="M23.4 446 V456.6 M28.8 446 V456.6" stroke="#3a3a3a" stroke-width="0.8"/>
<text x="33.6" y="454.8" font-size="10" fill="#5c5c5c" textLength="68.6" lengthAdjust="spacingAndGlyphs">Set next position</text>
<!-- timeline panel -->
<rect x="129.5" y="369.5" width="701" height="163.5" fill="none" stroke="#5a5a5a" stroke-width="1"/>
<rect x="130.5" y="370.5" width="699" height="162" fill="none" stroke="#3a3a3a" stroke-width="1"/>
<rect x="131" y="376.6" width="698" height="1" fill="#4a4a4a"/>
<rect x="131" y="416" width="698" height="1.2" fill="#484848"/>
<rect x="131" y="467.8" width="698" height="1.2" fill="#484848"/>
<g id="ticks" stroke="#606060" stroke-width="1"><path d="M136.5 377 V384"/><path d="M156.0 377 V381.4"/><path d="M175.0 377 V384"/><path d="M194.5 377 V381.4"/><path d="M214.0 377 V384"/><path d="M233.5 377 V381.4"/><path d="M252.5 377 V384"/><path d="M272.0 377 V381.4"/><path d="M291.5 377 V384"/><path d="M311.0 377 V381.4"/><path d="M330.0 377 V384"/><path d="M349.5 377 V381.4"/><path d="M369.0 377 V384"/><path d="M388.5 377 V381.4"/><path d="M407.5 377 V384"/><path d="M427.0 377 V381.4"/><path d="M446.5 377 V384"/><path d="M466.0 377 V381.4"/><path d="M485.0 377 V384"/><path d="M504.5 377 V381.4"/><path d="M524.0 377 V384"/><path d="M543.5 377 V381.4"/><path d="M562.5 377 V384"/><path d="M582.0 377 V381.4"/><path d="M601.5 377 V384"/><path d="M621.0 377 V381.4"/><path d="M640.0 377 V384"/><path d="M659.5 377 V381.4"/><path d="M679.0 377 V384"/><path d="M698.5 377 V381.4"/><path d="M717.5 377 V384"/><path d="M737.0 377 V381.4"/><path d="M756.5 377 V384"/><path d="M776.0 377 V381.4"/><path d="M795.0 377 V384"/><path d="M814.5 377 V381.4"/></g>
<g id="labels" font-size="9.2" fill="#d4d4d4"><text x="133.8" y="394.6" textLength="21.4" lengthAdjust="spacingAndGlyphs">00:00</text>
<text x="172.6" y="394.6" textLength="21.4" lengthAdjust="spacingAndGlyphs">00:01</text>
<text x="211.3" y="394.6" textLength="21.4" lengthAdjust="spacingAndGlyphs">00:02</text>
<text x="250.1" y="394.6" textLength="21.4" lengthAdjust="spacingAndGlyphs">00:03</text>
<text x="288.8" y="394.6" textLength="21.4" lengthAdjust="spacingAndGlyphs">00:04</text>
<text x="327.5" y="394.6" textLength="21.4" lengthAdjust="spacingAndGlyphs">00:05</text>
<text x="366.3" y="394.6" textLength="21.4" lengthAdjust="spacingAndGlyphs">00:06</text>
<text x="405.0" y="394.6" textLength="21.4" lengthAdjust="spacingAndGlyphs">00:07</text>
<text x="443.8" y="394.6" textLength="21.4" lengthAdjust="spacingAndGlyphs">00:08</text>
<text x="482.5" y="394.6" textLength="21.4" lengthAdjust="spacingAndGlyphs">00:09</text>
<text x="521.3" y="394.6" textLength="21.4" lengthAdjust="spacingAndGlyphs">00:10</text>
<text x="560.0" y="394.6" textLength="21.4" lengthAdjust="spacingAndGlyphs">00:11</text>
<text x="598.8" y="394.6" textLength="21.4" lengthAdjust="spacingAndGlyphs">00:12</text>
<text x="637.5" y="394.6" textLength="21.4" lengthAdjust="spacingAndGlyphs">00:13</text>
<text x="676.3" y="394.6" textLength="21.4" lengthAdjust="spacingAndGlyphs">00:14</text>
<text x="715.0" y="394.6" textLength="21.4" lengthAdjust="spacingAndGlyphs">00:15</text>
<text x="753.8" y="394.6" textLength="21.4" lengthAdjust="spacingAndGlyphs">00:16</text>
<text x="792.5" y="394.6" textLength="21.4" lengthAdjust="spacingAndGlyphs">00:17</text></g>
<!-- clips -->
<rect x="135.4" y="417.2" width="195.6" height="50.8" fill="#8e2de2"/>
<rect x="137.6" y="419.4" width="191.2" height="46.4" fill="#2b1a3c"/>
<rect x="138.4" y="420.2" width="189.6" height="44.8" fill="#452a5e"/>
<text x="144.6" y="446" font-size="9.2" fill="#c9c0d4" textLength="24.4" lengthAdjust="spacingAndGlyphs">Clip: 1</text>
<rect x="329.6" y="417.2" width="196.2" height="50.8" fill="#9a38ea"/>
<rect x="331.8" y="419.4" width="191.8" height="46.4" fill="#4a1a80"/>
<rect x="332.6" y="420.2" width="190.2" height="44.8" fill="#7a26c8"/>
<text x="338.4" y="446" font-size="9.2" fill="#d8c8ec" textLength="24.6" lengthAdjust="spacingAndGlyphs">Clip: 2</text>
<!-- playhead -->
<rect x="405.8" y="370.4" width="26.6" height="6" fill="#4a90e8"/>
<path d="M411.6 370.4 H425.4 V376.4 L420 380.4 H417 L411.6 376.4 Z" fill="#22b322"/>
<rect x="417.4" y="378" width="2" height="150" fill="#20d820"/>
</g>


<!-- CALLOUT -->
<g id="callout">
<rect x="80.9" y="335.1" width="38.3" height="33.8" rx="6" ry="6" fill="none" stroke="#f20000" stroke-width="2"/>
<path d="M125.5 225 H291.7 Q302.7 225 302.7 236 V294.3 Q302.7 305.3 291.7 305.3 H192.8 L105 347.5 L146.4 305.3 H125.5 Q114.5 305.3 114.5 294.3 V236 Q114.5 225 125.5 225 Z" fill="#ff0000" stroke="#f08a2e" stroke-width="0.9" stroke-linejoin="round"/>
<text x="124.6" y="264.2" font-size="29.6" font-weight="bold" fill="#fff" textLength="44.8" lengthAdjust="spacingAndGlyphs">10.</text>
<text x="175.2" y="265.2" font-size="14.6" fill="#fff" textLength="90" lengthAdjust="spacingAndGlyphs">Preview your</text>
<text x="176.6" y="289.2" font-size="14.6" fill="#fff" textLength="47.4" lengthAdjust="spacingAndGlyphs">movie.</text>
</g>


<!-- status -->
<text x="12.2" y="545.6" font-size="9.5" fill="#e0e0e0" textLength="23.4" lengthAdjust="spacingAndGlyphs">Ready</text>
</svg>
</body>
</html>
